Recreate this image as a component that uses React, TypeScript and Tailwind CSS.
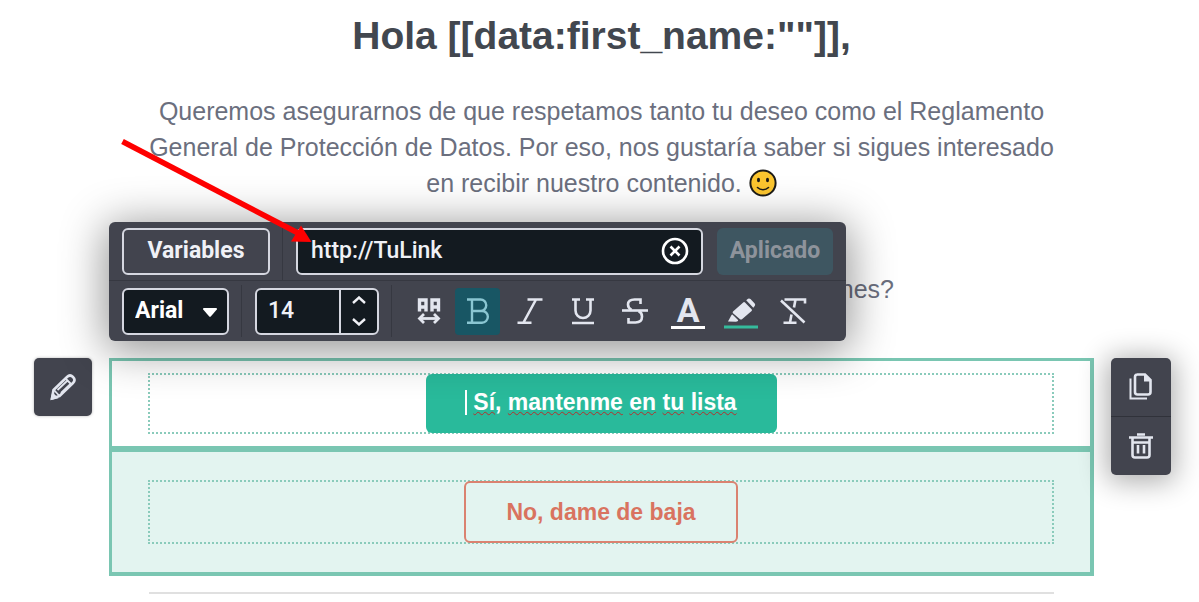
import type { ReactNode } from 'react';

interface IconProps {
  children: ReactNode;
  strokeWidth?: number;
}

// Every toolbar glyph is drawn on the same 40x40 board, centred on 0,0
function Icon({ children, strokeWidth = 3 }: IconProps) {
  return (
    <svg
      className="h-10 w-10 shrink-0"
      viewBox="-20 -20 40 40"
      fill="none"
      stroke="currentColor"
      strokeWidth={strokeWidth}
      aria-hidden="true"
    >
      {children}
    </svg>
  );
}

interface ToolButtonProps {
  label: string;
  active?: boolean;
  children: ReactNode;
}

function ToolButton({ label, active = false, children }: ToolButtonProps) {
  return (
    <button
      type="button"
      aria-label={label}
      aria-pressed={active}
      className={`flex h-[47px] w-[45px] items-center justify-center rounded ${
        active ? 'bg-[#185664] text-[#8ac6d2]' : 'text-[#e3e6ef]'
      }`}
    >
      {children}
    </button>
  );
}

function Smiley() {
  return (
    <svg className="inline-block h-7 w-7 align-[-5px]" viewBox="0 0 28 28" role="img" aria-label="Sonrisa">
      <circle cx="14" cy="14" r="12.6" fill="#fcc62f" stroke="#1c1b17" strokeWidth="2" />
      <ellipse cx="9.5" cy="11" rx="1.5" ry="2.2" fill="#1c1b17" />
      <ellipse cx="18.5" cy="11" rx="1.5" ry="2.2" fill="#1c1b17" />
      <path d="M8.5 18.5c3 3 8 3 11 0" fill="none" stroke="#1c1b17" strokeWidth="1.6" strokeLinecap="round" />
    </svg>
  );
}

function Toolbar() {
  return (
    <div className="absolute top-[222px] left-0 z-10 w-[737px] rounded-md bg-[#42444e] font-[Roboto,sans-serif] text-[23px] shadow-[0_6px_44px_4px_rgba(0,0,0,0.42)]">
      {/* Link row */}
      <div className="flex h-[59px] items-stretch border-b border-[#363841] px-[13px]">
        <div className="flex items-center border-r border-[#363841] pr-3">
          <button
            type="button"
            className="h-[47px] w-[148px] rounded-md border-2 border-[#d5d7e0] font-bold text-[#f0f1f6]"
          >
            Variables
          </button>
        </div>
        <div className="flex flex-1 items-center gap-[14px] pl-[13px]">
          <div className="flex h-[47px] flex-1 items-center rounded-md border-2 border-[#d5d7e0] bg-[#131a20] pr-3 pl-[13px]">
            <input
              type="text"
              aria-label="Enlace"
              defaultValue="http://TuLink"
              className="w-0 flex-1 bg-transparent font-medium text-[#f0f1f6] outline-none"
            />
            <button type="button" aria-label="Borrar enlace" className="text-white">
              <svg className="h-7 w-7" viewBox="0 0 28 28" fill="none" stroke="currentColor" strokeWidth="2.6">
                <circle cx="14" cy="14" r="12" />
                <path d="M9.5 9.5l9 9M18.5 9.5l-9 9" />
              </svg>
            </button>
          </div>
          <button type="button" disabled className="h-[47px] w-[116px] rounded-md bg-[#3e5661] font-bold text-[#8e939b]">
            Aplicado
          </button>
        </div>
      </div>

      {/* Format row */}
      <div className="flex h-[60px] items-center pr-[30px] pl-[13px]">
        <div className="relative">
          <select
            aria-label="Fuente"
            className="block h-[47px] w-[107px] appearance-none rounded-md border-2 border-[#d5d7e0] bg-[#131a20] pl-[11px] font-bold text-white"
          >
            <option>Arial</option>
          </select>
          <svg className="pointer-events-none absolute top-5 right-3 h-[9px] w-[14px]" viewBox="0 0 14 9" fill="#fff">
            <path d="M1 0h12q1.500.5.8 1.600L8 8.200q-1 1-2 0L.2 1.600Q-.5.5 1 0z" />
          </svg>
        </div>
        <div className="ml-3 h-[52px] border-l border-[#363841]" />
        <div className="ml-[13px] flex h-[47px] w-[124px] overflow-hidden rounded-md border-2 border-[#d5d7e0] bg-[#131a20]">
          <input
            type="text"
            aria-label="Tamaño"
            defaultValue="14"
            className="w-0 flex-1 bg-transparent pl-[11px] font-medium text-[#f0f1f6] outline-none"
          />
          <div className="flex w-[38px] flex-col border-l-2 border-[#d5d7e0] text-[#f0f1f6]">
            <button type="button" aria-label="Aumentar" className="flex flex-1 items-center justify-center">
              <svg className="h-2 w-[14px]" viewBox="0 0 14 8" fill="none" stroke="currentColor" strokeWidth="2.4">
                <path d="M1 7l6-5.500L13 7" />
              </svg>
            </button>
            <button type="button" aria-label="Reducir" className="flex flex-1 items-center justify-center">
              <svg className="h-2 w-[14px]" viewBox="0 0 14 8" fill="none" stroke="currentColor" strokeWidth="2.4">
                <path d="M1 1l6 5.500L13 1" />
              </svg>
            </button>
          </div>
        </div>
        <div className="ml-3 h-[52px] border-l border-[#363841]" />

        <div className="ml-[14px] flex">
          <ToolButton label="Espaciado">
            <Icon>
              <path d="M-9.500 .5v-11.500h6.500v11.500M-9.500-4h6.500M3 .5v-11.500h6.500v11.500M3-4h6.500" strokeWidth="3.400" />
              <path d="M-9 7.500h18" strokeWidth="2.800" />
              <path d="M-5 3l-4.500 4.500 4.500 4.500M5 3l4.500 4.500-4.500 4.500" strokeWidth="2.800" />
            </Icon>
          </ToolButton>
        </div>
        <div className="ml-1 flex flex-1 justify-between">
          <ToolButton label="Negrita" active>
            <Icon strokeWidth={2.4}>
              <path d="M-11-11.500H2.500a5.500 5.500 0 0 1 0 11.500H-6M2.500 0H4a5.800 5.800 0 0 1 0 11.700H-11M-6-11.500v23" />
            </Icon>
          </ToolButton>
          <ToolButton label="Cursiva">
            <Icon strokeWidth={2.6}>
              <path d="M-2.500-11.500h15M-12.500 11.700h14M6-11.500l-12.500 23" />
            </Icon>
          </ToolButton>
          <ToolButton label="Subrayado">
            <Icon strokeWidth={2.6}>
              <path d="M-11-11.500h8M3-11.500h8M-7.500-11.500v11a7.500 7.500 0 0 0 15 0v-11M-11 12h22" />
            </Icon>
          </ToolButton>
          <ToolButton label="Tachado">
            <Icon strokeWidth={2.6}>
              <path d="M-13-.5h26" />
              <path d="M5.500-7V-11.500H-.5Q-7-11.500-7-6.500q0 3.500 3.500 5.500M3.500 0Q7 1.500 7 5.500q0 6-6.500 6H-6.500V7" />
            </Icon>
          </ToolButton>
          <ToolButton label="Color de texto">
            <span className="flex h-9 w-[34px] items-center justify-center border-b-3 border-white text-[34px] leading-8 font-bold">
              A
            </span>
          </ToolButton>
          <ToolButton label="Resaltado">
            <Icon>
              <g fill="currentColor" stroke="none">
                <path d="M-13 10.500L-9.500 4q.5-.8 1.200-.2l5.300 5.200q.5.700-.5 1.200l-1.500.5z" />
                <path d="M-8 .5L2.500-8.700q.8-.6 1.500.2L10.800-1.500q.5.700-.2 1.400L1 8.200q-1 .8-2 0L-8 2.200q-.8-.9 0-1.700z" />
                <path d="M5.200-10.800l1.800-1.400q1.300-.8 2.500.3l4.200 4.400q1 1.300 0 2.500L12.300-3.200z" />
              </g>
              <path d="M-17 16h34" stroke="#35bb9c" />
            </Icon>
          </ToolButton>
          <ToolButton label="Quitar formato">
            <Icon strokeWidth={2.6}>
              <path d="M-8.500-11.500h20.500v4M2.500-11.500l-1.500 8M-1.500 3.500L-3 11.500M-9.500 11.700h13" />
              <path d="M-12-10.500l23.500 22" />
            </Icon>
          </ToolButton>
        </div>
      </div>
    </div>
  );
}

// Words the spell checker marks in the button being edited
const markedWords = ['mantenme', 'en', 'tu', 'lista'];
const wavy =
  'underline decoration-[#b52f2b] decoration-wavy decoration-[1px] underline-offset-1 [text-decoration-skip-ink:none]';

export default function App() {
  return (
    <main className="relative min-h-screen overflow-hidden bg-white font-['Liberation_Sans',Arial,sans-serif]">
      <div className="grid grid-cols-[58px_minmax(0,1fr)_60px] gap-x-[17px] pr-7 pl-[34px]">
        <section className="relative col-start-2 h-[358px] pt-3 text-center">
          <h1 className="text-[39px] leading-12 font-bold text-[#42474f]">Hola [[data:first_name:""]],</h1>
          <p className="mx-auto mt-[33px] max-w-[906px] text-[25px] leading-9 text-[#6b6f7e]">
            Queremos asegurarnos de que respetamos tanto tu deseo como el Reglamento General de
            Protección de Datos. Por eso, nos gustaría saber si sigues interesado en recibir nuestro
            contenido. <Smiley />
          </p>
          <p className="mt-[70px] pr-[200px] text-right text-[25px] leading-9 text-[#6b6f7e]">nes?</p>
          <Toolbar />
        </section>

        {/* Row actions, left */}
        <div className="col-start-1 row-start-2">
          <button
            type="button"
            aria-label="Editar"
            className="flex h-[58px] w-full items-center justify-center rounded-[5px] bg-[#42444e] text-[#e3e6ef] shadow-[0_0_3px_rgba(0,0,0,0.3)]"
          >
            <Icon strokeWidth={2.6}>
              <path d="M-11 11.500l1.500-8.500L4-10q3-3 6 0 3 3 0 6L-3.500 9z" strokeLinejoin="round" />
              <path d="M-9 3l5.500 6M-5.500 3L4-6M-2 6L8-3.500M2.500-8.500l6 6" strokeWidth="1.800" />
              <path d="M-11 11.500l1-4 3 3z" fill="currentColor" />
            </Icon>
          </button>
        </div>

        {/* Editable blocks */}
        <div className="col-start-2 row-start-2">
          <div className="border-3 border-r-4 border-b-6 border-[#7ac6b2] px-9 py-3">
            <div className="flex justify-center border-2 border-dotted border-[#8acbbb]">
              <button
                type="button"
                className="-my-px flex h-[59px] w-[351px] items-center justify-center rounded-md bg-[#29ba9b] pb-0.5 text-[23px] font-bold text-white"
              >
                <span className="mr-[6px] h-[25px] border-l-2 border-white" />
                <span>
                  <span className={wavy}>Sí</span>,
                  {markedWords.map((word) => (
                    <span key={word}>
                      {' '}
                      <span className={wavy}>{word}</span>
                    </span>
                  ))}
                </span>
              </button>
            </div>
          </div>
          <div className="border-4 border-t-0 border-l-3 border-[#7ac6b2] bg-[#e3f4f0] px-9 py-7">
            <div className="flex justify-center border-2 border-dotted border-[#8acbbb]">
              <button
                type="button"
                className="-my-px h-[62px] w-[274px] rounded-md border-2 border-[#da8270] bg-[#e3f4f0] text-[23px] font-bold text-[#d9735f]"
              >
                No, dame de baja
              </button>
            </div>
          </div>
          <hr className="mx-10 mt-4 border-t-2 border-[#e0e0e0]" />
        </div>

        {/* Row actions, right */}
        <div className="col-start-3 row-start-2">
          <div className="overflow-hidden rounded-[5px] bg-[#42444e] text-[#e3e6ef] shadow-[0_3px_28px_4px_rgba(0,0,0,0.32)]">
            <button
              type="button"
              aria-label="Duplicar"
              className="flex h-[59px] w-full items-center justify-center border-b border-[#30323a]"
            >
              <Icon strokeWidth={2.6}>
                <path d="M-4-12.500H4L9.500-7V5q0 2.500-2.500 2.500H-3.500Q-6 7.500-6 5V-10q0-2.500 2.500-2.500z" />
                <path d="M3-13v7.500h7.500z" fill="currentColor" stroke="none" />
                <path d="M-10.500-8.500V11.500H6" strokeWidth="2" />
              </Icon>
            </button>
            <button type="button" aria-label="Eliminar" className="flex h-[58px] w-full items-center justify-center">
              <Icon strokeWidth={2.6}>
                <path d="M-12-8.500h24M-4-11.500h8" />
                <path d="M-8.500-8V9q0 2.500 2.500 2.500H6q2.500 0 2.500-2.500V-8M-8.500-3.500h17" />
                <path d="M-3-1V7.500M3-1V7.500" />
              </Icon>
            </button>
          </div>
        </div>
      </div>

      {/* Pointer towards the link field */}
      <svg
        className="pointer-events-none absolute top-[136px] left-[118px] z-20 h-[110px] w-[200px]"
        viewBox="0 0 200 110"
        aria-hidden="true"
      >
        <path d="M4.500 5.500L180 97" stroke="#fe0000" strokeWidth="5.600" />
        <path d="M183 89.500L193.500 106L173 105.500z" fill="#fe0000" />
      </svg>
    </main>
  );
}
